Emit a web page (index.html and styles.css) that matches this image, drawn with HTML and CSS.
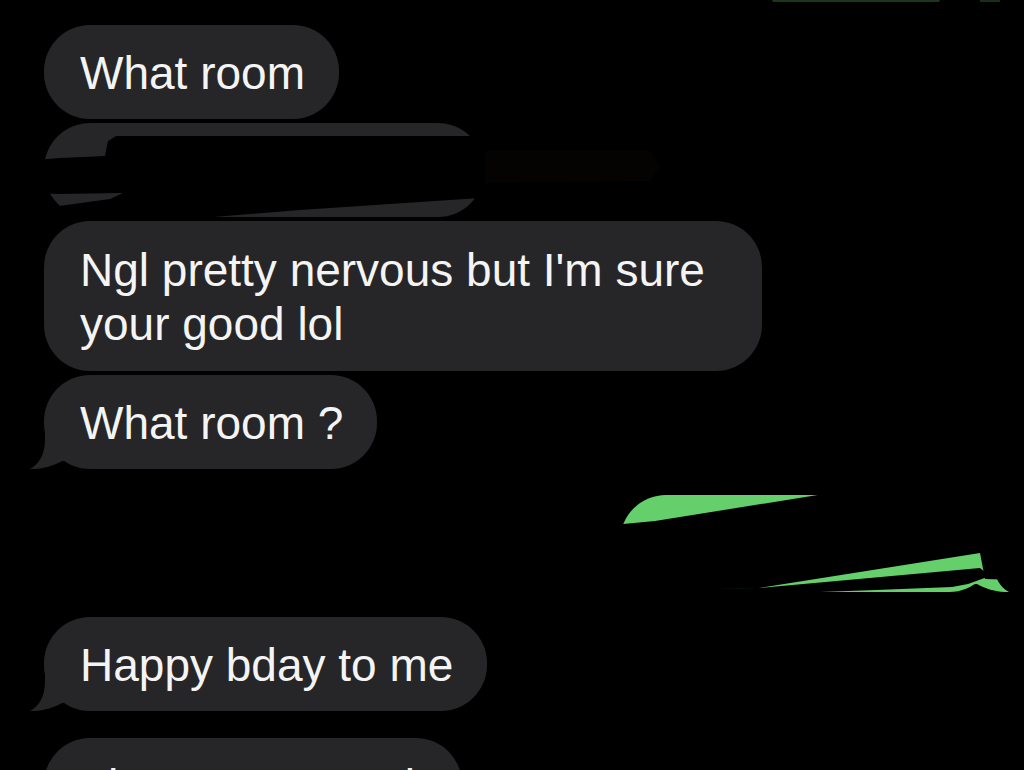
FILE: index.html
```html
<!DOCTYPE html>
<html>
<head>
<meta charset="utf-8">
<link rel="stylesheet" href="styles.css">
</head>
<body>
<div class="chat">
  <div class="prev-sent"><span class="prev-sent-edge"></span><span class="prev-sent-tail"></span></div>

  <div class="bubble in first">What room</div>

  <div class="redact">
    <div class="bubble in blank">&nbsp;</div>
    <svg class="scribble" width="680" height="120" viewBox="0 113 680 120" aria-hidden="true">
      <polygon fill="#000" points="0,163 60,158 105,156 108,141 116,136 478,136 485,150 650,150 662,166 650,182 485,184 480,197 120,193 60,194 0,192"/>
      <polygon fill="#050202" points="485,151 650,151 661,166 650,181 485,183"/>
      <polygon fill="#000" points="52,207 110,199 125,192 482,192 480,198 300,210 130,224 90,224 60,214"/>
    </svg>
  </div>

  <div class="bubble in multi">Ngl pretty nervous but I'm sure your good lol</div>

  <div class="bubble in tailed">What room ?
    <svg class="tail" width="50" height="40" viewBox="-15 -40 50 40" aria-hidden="true"><path d="M1 -40 L1 -30 C1 -14 -5 -5 -14 0 C-5 0.5 8 -2 18 -8 L35 -8 L35 -40 Z"/></svg>
  </div>

  <div class="sent">
    <div class="bubble out">&nbsp;
      <svg class="tail-r" width="50" height="40" viewBox="-35 -40 50 40" aria-hidden="true"><path d="M-1 -40 L-1 -30 C-1 -14 5 -5 14 0 C5 0.5 -8 -2 -18 -8 L-35 -8 L-35 -40 Z"/></svg>
    </div>
    <svg class="scribble-sent" width="420" height="115" viewBox="600 488 420 115" aria-hidden="true">
      <polygon fill="#000" points="600,525 623,524 655,521 830,493 1020,488 1020,580 985,579 980,553 759,588 600,592"/>
      <polygon fill="#000" points="600,589 759,588 980,568 990,576 968,584 952,587 876,590 820,592 820,603 600,603"/>
    </svg>
  </div>

  <div class="bubble in tailed late">Happy bday to me
    <svg class="tail" width="50" height="40" viewBox="-15 -40 50 40" aria-hidden="true"><path d="M1 -40 L1 -30 C1 -14 -5 -5 -14 0 C-5 0.5 8 -2 18 -8 L35 -8 L35 -40 Z"/></svg>
  </div>

  <div class="bubble in last">Then we can ask</div>
</div>
</body>
</html>
```

FILE: styles.css
```css
* { box-sizing: border-box; }

html, body {
  margin: 0;
  padding: 0;
  background: #000;
  height: 770px;
  overflow: hidden;
}

.chat {
  display: flex;
  flex-direction: column;
  align-items: flex-start;
  padding-left: 44px;
  font-family: "Liberation Sans", Arial, sans-serif;
  font-size: 46px;
  line-height: 54px;
  color: #f4f4f4;
}

.prev-sent {
  align-self: stretch;
  height: 2px;
  display: flex;
  justify-content: flex-end;
  gap: 40px;
  padding-right: 24px;
}

.prev-sent-edge {
  width: 168px;
  height: 2px;
  background: #1c351b;
  border-radius: 0 0 4px 4px;
}

.prev-sent-tail {
  width: 20px;
  height: 2px;
  background: #1a2f19;
}

.bubble {
  position: relative;
  border-radius: 46px;
  padding: 21px 34px 19px 36px;
  white-space: normal;
}

.bubble.in {
  background: #262629;
  margin-top: 4px;
}

.bubble.first { margin-top: 23px; }

.bubble.multi {
  max-width: 718px;
  padding-top: 22px;
  padding-bottom: 20px;
}

.bubble.blank {
  width: 440px;
  margin-top: 0;
}

.redact {
  position: relative;
  margin-top: 4px;
}

.scribble {
  position: absolute;
  left: -44px;
  top: -10px;
}

.tail {
  position: absolute;
  left: -15px;
  bottom: 0;
  fill: #262629;
}

.sent {
  position: relative;
  align-self: flex-end;
  margin-right: 29px;
  margin-top: 26px;
}

.bubble.out {
  width: 375px;
  height: 97px;
  background: #64cf6b;
  padding: 0;
}

.tail-r {
  position: absolute;
  right: -15px;
  bottom: 0;
  fill: #64cf6b;
}

.scribble-sent {
  position: absolute;
  left: -20px;
  top: -7px;
}

.bubble.late { margin-top: 25px; }

.bubble.last { margin-top: 27px; }
```
